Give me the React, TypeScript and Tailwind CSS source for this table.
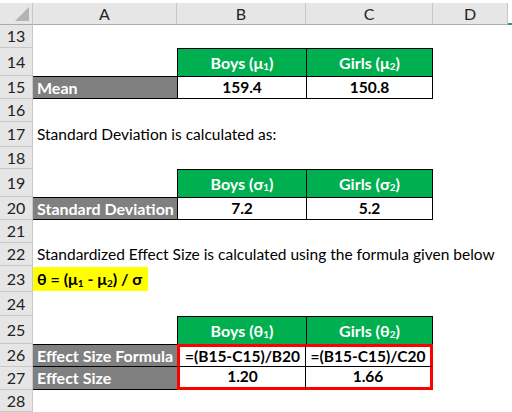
import type { ReactNode } from "react";

type Props = { className?: string; children?: ReactNode };

function Sub({ children }: { children: ReactNode }) {
  return <span className="relative top-[4px] text-[10px]">{children}</span>;
}

function RowHead({ n }: { n: number }) {
  return (
    <div className="flex w-[33px] shrink-0 items-center justify-center border-r border-b border-[#c8c8c8] bg-[#e6e6e6] text-[16px] text-[#222]">
      {n}
    </div>
  );
}

function Row({ n, className, children }: Props & { n: number }) {
  return (
    <div className={`flex ${className ?? ""}`}>
      <RowHead n={n} />
      {children}
    </div>
  );
}

function Blank({ className }: Props) {
  return <div className={`shrink-0 ${className ?? ""}`} />;
}

function ColHead({ className, children }: Props) {
  return (
    <div
      className={`flex shrink-0 items-center justify-center border-r border-b border-[#c8c8c8] border-b-[#ababab] bg-[#e6e6e6] text-[16px] text-[#222] ${className ?? ""}`}
    >
      {children}
    </div>
  );
}

function Label({ className, children }: Props) {
  return (
    <div
      className={`flex w-[144px] shrink-0 items-center whitespace-nowrap border-b border-black bg-[#808080] pl-1 text-[16px] font-bold text-white ${className ?? ""}`}
    >
      {children}
    </div>
  );
}

function Green({ className, children }: Props) {
  return (
    <div
      className={`flex shrink-0 items-center justify-center whitespace-nowrap border-t border-l border-black bg-[#00b050] text-[16px] font-bold text-white ${className ?? ""}`}
    >
      {children}
    </div>
  );
}

function Value({ className, children }: Props) {
  return (
    <div
      className={`flex shrink-0 items-center justify-center whitespace-nowrap border-l border-black text-[15.5px] font-bold text-black ${className ?? ""}`}
    >
      {children}
    </div>
  );
}

function Note({ children }: Props) {
  return (
    <div className="flex w-[144px] shrink-0 items-center whitespace-nowrap pl-1 text-black">
      {children}
    </div>
  );
}

export default function App() {
  return (
    <div className="h-[412px] w-[512px] overflow-hidden bg-white pt-[3px] font-['Lato',sans-serif] text-[15.5px]">
      <div className="flex h-[22px]">
        <div className="flex w-[33px] shrink-0 items-end justify-end border-r border-b border-[#c8c8c8] border-b-[#ababab] bg-[#e6e6e6] pr-[3px] pb-[3px]">
          <svg width="14" height="14" viewBox="0 0 14 14">
            <polygon points="14,0 14,14 0,14" fill="#b4b4b4" />
          </svg>
        </div>
        <ColHead className="w-[144px]">A</ColHead>
        <ColHead className="w-[129px]">B</ColHead>
        <ColHead className="w-[127px]">C</ColHead>
        <ColHead className="w-[75px]">D</ColHead>
        <div className="flex flex-1 items-end">
          <div className="h-[2px] w-full bg-[#21a366]" />
        </div>
      </div>

      <Row n={13} className="h-[23px]" />

      <Row n={14} className="h-[28px]">
        <Blank className="w-[144px]" />
        <Green className="w-[129px]">
          Boys (μ<Sub>1</Sub>)
        </Green>
        <Green className="w-[127px] border-r">
          Girls (μ<Sub>2</Sub>)
        </Green>
      </Row>

      <Row n={15} className="h-[23px]">
        <Label className="border-t">Mean</Label>
        <Value className="w-[129px] border-y">159.4</Value>
        <Value className="w-[127px] border-y border-r">150.8</Value>
      </Row>

      <Row n={16} className="h-[23px]" />

      <Row n={17} className="h-[25px]">
        <Note>Standard Deviation is calculated as:</Note>
      </Row>

      <Row n={18} className="h-[22px]" />

      <Row n={19} className="h-[28px]">
        <Blank className="w-[144px]" />
        <Green className="w-[129px]">
          Boys (σ<Sub>1</Sub>)
        </Green>
        <Green className="w-[127px] border-r">
          Girls (σ<Sub>2</Sub>)
        </Green>
      </Row>

      <Row n={20} className="h-[23px]">
        <Label className="border-t">Standard Deviation</Label>
        <Value className="w-[129px] border-y">7.2</Value>
        <Value className="w-[127px] border-y border-r">5.2</Value>
      </Row>

      <Row n={21} className="h-[23px]" />

      <Row n={22} className="h-[23px]">
        <Note>Standardized Effect Size is calculated using the formula given below</Note>
      </Row>

      <Row n={23} className="h-[26px]">
        <div className="flex w-[144px] shrink-0 items-end pb-px">
          <div className="flex h-[24px] w-[115px] items-center whitespace-nowrap bg-[#ffff00] pl-1 text-[16px] font-bold text-black">
            θ = (μ<Sub>1</Sub>&nbsp;- μ<Sub>2</Sub>) / σ
          </div>
        </div>
      </Row>

      <Row n={24} className="h-[24px]" />

      <Row n={25} className="h-[28px]">
        <Blank className="w-[144px]" />
        <Green className="w-[129px]">
          Boys (θ<Sub>1</Sub>)
        </Green>
        <Green className="w-[127px] border-r">
          Girls (θ<Sub>2</Sub>)
        </Green>
      </Row>

      <Row n={26} className="h-[23px]">
        <Label className="border-t">Effect Size Formula</Label>
        <Value className="w-[129px] border-t-[3px] border-l-[3px] border-r border-b border-t-[#ff0000] border-l-[#ff0000]">
          =(B15-C15)/B20
        </Value>
        <Value className="w-[127px] border-l-0 border-t-[3px] border-r-[3px] border-b border-t-[#ff0000] border-r-[#ff0000]">
          =(B15-C15)/C20
        </Value>
      </Row>

      <Row n={27} className="h-[23px]">
        <Label>Effect Size</Label>
        <Value className="w-[129px] border-l-[3px] border-b-[3px] border-r border-l-[#ff0000] border-b-[#ff0000]">
          1.20
        </Value>
        <Value className="w-[127px] border-l-0 border-r-[3px] border-b-[3px] border-r-[#ff0000] border-b-[#ff0000]">
          1.66
        </Value>
      </Row>

      <Row n={28} className="h-[22px]" />
    </div>
  );
}
